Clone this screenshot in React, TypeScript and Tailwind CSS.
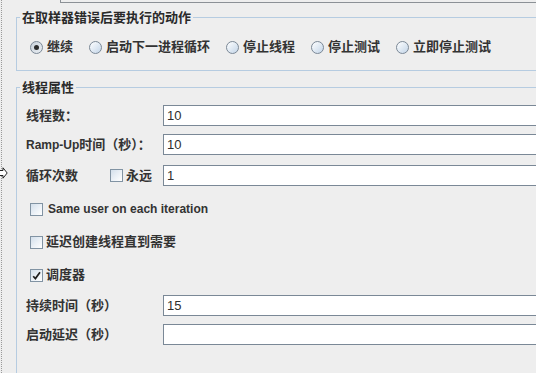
import React from 'react';

function Radio({ on }: { on?: boolean }) {
  return (
    <span
      className={
        'w-[13px] h-[13px] rounded-full border border-[#7b8896] flex items-center justify-center shrink-0 ' +
        (on ? 'bg-linear-to-br from-[#c9d1da] to-[#e9eef3]' : 'bg-linear-to-br from-white to-[#c3d5e8]')
      }
    >
      {on && <span className="w-[5px] h-[5px] rounded-full bg-[#2b2b2b]" />}
    </span>
  );
}

function Check({ on }: { on?: boolean }) {
  return (
    <span className="w-[13px] h-[13px] border border-[#8193a3] bg-linear-to-br from-[#d3dfeb] via-[#eaf0f6] to-white flex items-center justify-center shrink-0">
      {on && (
        <svg width="9" height="9" viewBox="0 0 9 9">
          <path d="M1.2 5.2 L3.4 7.6 L8 1.2" stroke="#1e1e1e" strokeWidth="1.7" fill="none" />
        </svg>
      )}
    </span>
  );
}

function Field({ value }: { value?: string }) {
  return (
    <div className="flex-1 h-[21px] bg-white border border-[#7a8896] border-r-0 flex items-center pl-[3px] text-[13px] font-normal text-[#2e2e2e]">
      {value}
    </div>
  );
}

const actions = ['继续', '启动下一进程循环', '停止线程', '停止测试', '立即停止测试'];

export default function App() {
  return (
    <div className="w-[536px] h-[373px] bg-[#eeeeee] overflow-hidden flex relative font-['Liberation_Sans','Noto_Sans_CJK_SC',sans-serif] font-bold text-[#333]">
      {/* splitter */}
      <div className="w-[16px] shrink-0 relative">
        <div className="ml-[1px] w-0 h-full border-l border-dotted border-[#9a9a9a]" />
        <svg className="absolute left-0 top-[167px]" width="8" height="12" viewBox="0 0 8 12">
          <path d="M0 3.5 H3 V0.8 L7.2 6 L3 11.2 V8.5 H0" fill="white" stroke="#222" strokeWidth="1" />
        </svg>
      </div>

      <div className="w-[600px] shrink-0 flex flex-col">
        <div className="ml-[44px] h-[3px] shrink-0 border-l border-b border-[#8c9196]" />

        <fieldset className="shrink-0 mt-[6px] border border-[#b6cce1] p-0 pt-[11px] pb-[13px]">
          <legend className="ml-[3px] px-[2px] text-[13px] leading-[17px] text-[#2a2a2a]">在取样器错误后要执行的动作</legend>
          <div className="flex items-center h-[20px] pl-[13px] gap-x-[16px] text-[13px]">
            {actions.map((a, i) => (
              <div key={a} className="flex items-center gap-[4px]">
                <Radio on={i === 0} />
                <span>{a}</span>
              </div>
            ))}
          </div>
        </fieldset>

        <fieldset className="shrink-0 mt-[8px] border border-[#b6cce1] p-0 pt-[9px] pb-[60px] pl-[9px]">
          <legend className="ml-[-6px] px-[2px] text-[13px] leading-[17px] text-[#2a2a2a]">线程属性</legend>

          <div className="flex items-center h-[21px]">
            <div className="w-[137px] text-[13px]">线程数：</div>
            <Field value="10" />
          </div>

          <div className="flex items-center h-[21px] mt-[8px]">
            <div className="w-[137px] text-[12px]">
              Ramp-Up<span className="text-[13px]">时间（秒）：</span>
            </div>
            <Field value="10" />
          </div>

          <div className="flex items-center h-[21px] mt-[10px]">
            <div className="w-[137px] flex items-center text-[13px]">
              <span className="w-[84px]">循环次数</span>
              <Check />
              <span className="ml-[3px]">永远</span>
            </div>
            <Field value="1" />
          </div>

          <div className="flex items-center h-[20px] mt-[13px] pl-[4px] gap-[5px]">
            <Check />
            <span className="text-[12px]">Same user on each iteration</span>
          </div>

          <div className="flex items-center h-[20px] mt-[13px] pl-[4px] gap-[3px]">
            <Check />
            <span className="text-[13px]">延迟创建线程直到需要</span>
          </div>

          <div className="flex items-center h-[20px] mt-[13px] pl-[4px] gap-[3px]">
            <Check on />
            <span className="text-[13px]">调度器</span>
          </div>

          <div className="flex items-center h-[21px] mt-[10px]">
            <div className="w-[137px] text-[13px]">持续时间（秒）</div>
            <Field value="15" />
          </div>

          <div className="flex items-center h-[21px] mt-[8px]">
            <div className="w-[137px] text-[13px]">启动延迟（秒）</div>
            <Field />
          </div>
        </fieldset>
      </div>
    </div>
  );
}
